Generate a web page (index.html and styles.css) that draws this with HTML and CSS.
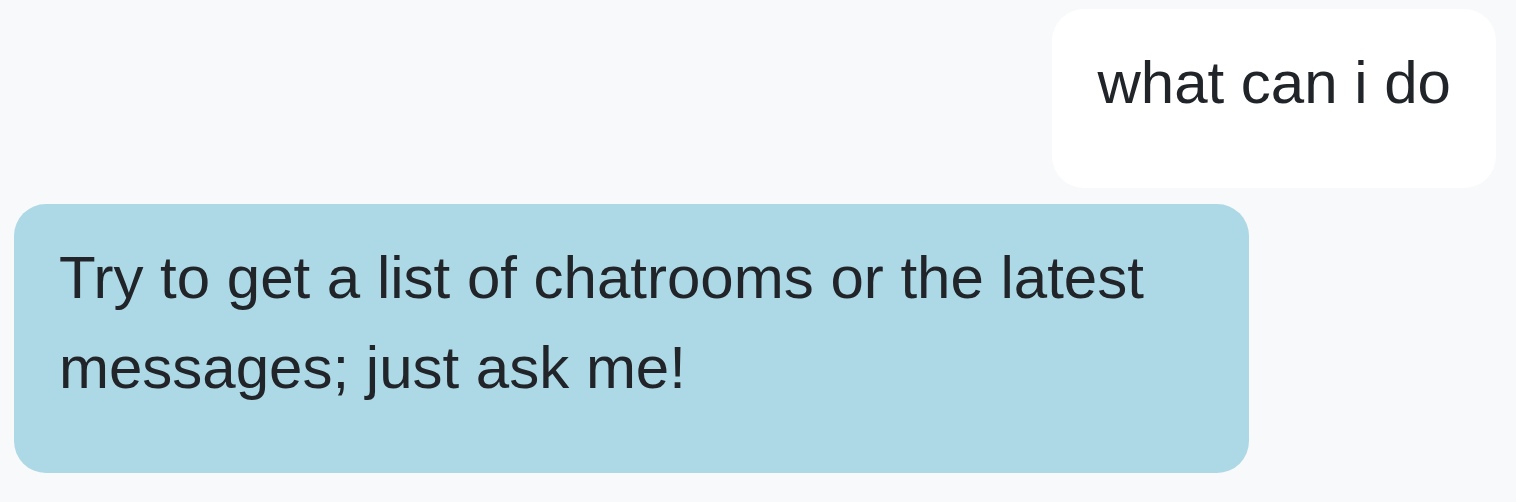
FILE: index.html
```html
<!DOCTYPE html>
<html lang="en">
<head>
<meta charset="utf-8">
<title>Chat</title>
<link rel="stylesheet" href="styles.css">
</head>
<body>
<div class="chat">
  <div class="row row-user">
    <div class="bubble bubble-user"><p>what can i do</p></div>
  </div>
  <div class="row row-bot">
    <div class="bubble bubble-bot"><p>Try to get a list of chatrooms or the latest messages; just ask me!</p></div>
  </div>
</div>
</body>
</html>
```

FILE: styles.css
```css
html, body {
  margin: 0;
  padding: 0;
  background: #f8f9fa;
}
body {
  font-family: "Liberation Sans", Arial, sans-serif;
  font-size: 60px;
  line-height: 1.5;
  color: #212529;
}
.chat {
  display: flex;
  flex-direction: column;
  gap: 16px;
  padding: 9px 20px 0 14px;
}
.row {
  display: flex;
}
.row-user {
  justify-content: flex-end;
}
.row-bot {
  justify-content: flex-start;
}
.bubble {
  border-radius: 32px;
  padding: 29px 45px 0 45px;
  box-sizing: border-box;
}
.bubble p {
  margin: 0 0 60px 0;
}
.bubble-user {
  background: #ffffff;
}
.bubble-bot {
  background: #add8e6;
  width: 83.3333%;
}
```
